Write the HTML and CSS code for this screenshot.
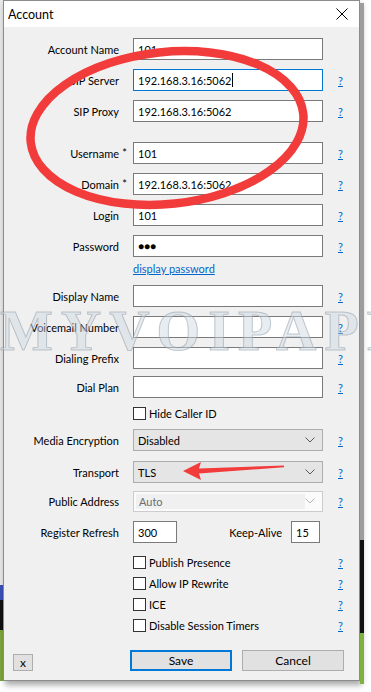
FILE: index.html
```html
<!DOCTYPE html>
<html lang="en">

<head>
    <meta charset="UTF-8" />
    <meta name="viewport" content="width=device-width, initial-scale=1" />
    <title>Account</title>
    <link rel="stylesheet" href="styles.css">
</head>

<body>
    <div class="desktop">
        <div class="sliver-left"></div>

        <div class="window">
            <header class="titlebar">
                <span class="title">Account</span>
                <svg class="close" width="12" height="12" viewBox="0 0 12 12">
                    <path d="M0.5 0.5 L11.5 11.5 M11.5 0.5 L0.5 11.5" stroke="#000" stroke-width="1" />
                </svg>
            </header>

            <main class="form">
                <div class="row">
                    <label class="label">Account Name</label>
                    <div class="field">101</div>
                    <span></span>
                </div>
                <div class="row">
                    <label class="label">SIP Server</label>
                    <div class="field focused">192.168.3.16:5062<span class="caret"></span></div>
                    <a class="help">?</a>
                </div>
                <div class="row gap-wide">
                    <label class="label">SIP Proxy</label>
                    <div class="field">192.168.3.16:5062</div>
                    <a class="help">?</a>
                </div>
                <div class="row">
                    <label class="label">Username<span class="req">*</span></label>
                    <div class="field">101</div>
                    <a class="help">?</a>
                </div>
                <div class="row">
                    <label class="label">Domain<span class="req">*</span></label>
                    <div class="field">192.168.3.16:5062</div>
                    <a class="help">?</a>
                </div>
                <div class="row">
                    <label class="label">Login</label>
                    <div class="field">101</div>
                    <a class="help">?</a>
                </div>
                <div class="row gap-none">
                    <label class="label">Password</label>
                    <div class="field dots">&#9679;&#9679;&#9679;</div>
                    <a class="help">?</a>
                </div>
                <div class="row link-row">
                    <span></span>
                    <a class="link">display password</a>
                    <span></span>
                </div>
                <div class="row">
                    <label class="label">Display Name</label>
                    <div class="field"></div>
                    <a class="help">?</a>
                </div>
                <div class="row">
                    <label class="label">Voicemail Number</label>
                    <div class="field"></div>
                    <a class="help">?</a>
                </div>
                <div class="row gap-small">
                    <label class="label">Dialing Prefix</label>
                    <div class="field"></div>
                    <a class="help">?</a>
                </div>
                <div class="row gap-small">
                    <label class="label">Dial Plan</label>
                    <div class="field"></div>
                    <a class="help">?</a>
                </div>
                <div class="row check-row gap-check">
                    <span></span>
                    <label class="check"><span class="box"></span>Hide Caller ID</label>
                    <span></span>
                </div>
                <div class="row gap-select">
                    <label class="label">Media Encryption</label>
                    <div class="select">Disabled
                        <svg class="chevron" width="10" height="6" viewBox="0 0 10 6"><path d="M0.5 0.5 L5 5 L9.5 0.5" fill="none" stroke="#5a5a5a" /></svg>
                    </div>
                    <a class="help">?</a>
                </div>
                <div class="row gap-small">
                    <label class="label">Transport</label>
                    <div class="select">TLS
                        <svg class="chevron" width="10" height="6" viewBox="0 0 10 6"><path d="M0.5 0.5 L5 5 L9.5 0.5" fill="none" stroke="#5a5a5a" /></svg>
                    </div>
                    <a class="help">?</a>
                </div>
                <div class="row">
                    <label class="label">Public Address</label>
                    <div class="select disabled">
                        <span class="select-text">Auto</span>
                        <svg class="chevron" width="10" height="6" viewBox="0 0 10 6"><path d="M0.5 0.5 L5 5 L9.5 0.5" fill="none" stroke="#b4b4b4" /></svg>
                    </div>
                    <a class="help">?</a>
                </div>
                <div class="row gap-refresh">
                    <label class="label">Register Refresh</label>
                    <div class="split">
                        <div class="field small">300</div>
                        <span class="keep-label">Keep-Alive</span>
                        <div class="field tiny">15</div>
                    </div>
                    <span></span>
                </div>
                <div class="row check-row gap-tight">
                    <span></span>
                    <label class="check"><span class="box"></span>Publish Presence</label>
                    <a class="help">?</a>
                </div>
                <div class="row check-row gap-tight">
                    <span></span>
                    <label class="check"><span class="box"></span>Allow IP Rewrite</label>
                    <a class="help">?</a>
                </div>
                <div class="row check-row gap-tight">
                    <span></span>
                    <label class="check"><span class="box"></span>ICE</label>
                    <a class="help">?</a>
                </div>
                <div class="row check-row gap-last">
                    <span></span>
                    <label class="check"><span class="box"></span>Disable Session Timers</label>
                    <a class="help">?</a>
                </div>

                <div class="footer">
                    <button class="btn btn-x">x</button>
                    <button class="btn btn-save">Save</button>
                    <button class="btn">Cancel</button>
                </div>
            </main>
        </div>

        <div class="sliver-right"></div>
    </div>

    <!-- annotations drawn over the screenshot -->
    <div class="watermark-clip">
        <div class="watermark">MYVOIPAPP</div>
    </div>
    <svg class="marks" width="371" height="692" viewBox="0 0 371 692">
        <ellipse cx="167" cy="128" rx="137" ry="76" transform="rotate(-6 167 128)"
            fill="none" stroke="#f23b3b" stroke-width="8.5" />
        <path d="M183 471 L201 462 L199 468.5 L284 465.5 L284 467.2 L199 473.5 L201 480 Z" fill="#f23b3b" />
    </svg>
</body>
</html>
```

FILE: styles.css
```css
:root {
    --face: #f0f0f0;
    --btn: #e1e1e1;
    --btn-border: #adadad;
    --field-border: #7a7a7a;
    --accent: #0078d7;
    --link: #0066cc;
    --text: #000;
}

* {
    margin: 0;
    padding: 0;
    box-sizing: border-box;
}

body {
    font-family: 'Lato', sans-serif;
    font-size: 11px;
    color: var(--text);
    background-color: white;
    position: relative;
    width: 371px;
    height: 692px;
    overflow: hidden;
}

.desktop {
    display: flex;
    align-items: flex-start;
}

.sliver-left {
    width: 3px;
    height: 681px;
    background: linear-gradient(to bottom, #e9e9e9 0, #e9e9e9 585px, #3b4fb8 585px, #3b4fb8 600px, #111 600px, #111 630px, #7ba63a 630px);
}

.sliver-right {
    width: 4px;
    height: 681px;
    margin-top: 3px;
    background: linear-gradient(to bottom, #9d9d9d 0, #9d9d9d 537px, #111 537px, #111 630px, #80b040 630px);
}

.window {
    width: 357px;
    height: 681px;
    border: 1px solid #8c8c8c;
    background-color: var(--face);
    box-shadow: 2px 4px 6px rgba(0, 0, 0, 0.35);
    display: flex;
    flex-direction: column;
}

.titlebar {
    height: 26px;
    background-color: white;
    display: flex;
    align-items: center;
    justify-content: space-between;
    padding: 0 11px 0 4px;
}

.title {
    font-size: 12.5px;
}

.close {
    display: block;
    margin-top: -1px;
}

.form {
    padding-top: 11px;
    display: flex;
    flex-direction: column;
}

.row {
    display: grid;
    grid-template-columns: 115px 190px auto;
    column-gap: 14px;
    align-items: center;
    height: 22px;
    margin-bottom: 9px;
}

.gap-wide {
    margin-bottom: 20px;
}

.gap-none {
    margin-bottom: 3px;
}

.gap-small {
    margin-bottom: 7px;
}

.gap-check {
    margin-bottom: 8px;
}

.gap-select {
    margin-bottom: 10px;
}

.gap-refresh {
    margin-bottom: 11px;
}

.gap-tight {
    margin-bottom: 5px;
}

.gap-last {
    margin-bottom: 0;
}

.link-row {
    height: 16px;
}

.check-row {
    height: 16px;
}

.label {
    text-align: right;
    position: relative;
    white-space: nowrap;
}

.req {
    position: absolute;
    right: -8px;
    top: -1px;
}

.field {
    height: 22px;
    background-color: white;
    border: 1px solid var(--field-border);
    padding: 0 4px;
    display: flex;
    align-items: center;
    white-space: nowrap;
}

.focused {
    border-color: var(--accent);
}

.caret {
    width: 1px;
    height: 14px;
    background-color: black;
    margin-left: 1px;
}

.dots {
    font-size: 10px;
}

.help {
    color: var(--link);
    text-decoration: underline;
    padding-left: 1px;
}

.link {
    color: var(--link);
    text-decoration: underline;
    white-space: nowrap;
}

.check {
    display: flex;
    align-items: center;
    gap: 3px;
    white-space: nowrap;
}

.box {
    width: 13px;
    height: 13px;
    border: 1px solid #333;
    background-color: white;
}

.select {
    height: 22px;
    background-color: #e5e5e5;
    border: 1px solid var(--btn-border);
    padding: 0 4px;
    display: flex;
    align-items: center;
    justify-content: space-between;
}

.chevron {
    display: block;
    margin-right: 3px;
}

.disabled {
    height: 21px;
    background-color: #fbfbfb;
    border-color: #cccccc;
    padding: 2px 0 2px 2px;
    color: #6d6d6d;
}

.disabled .chevron {
    margin-right: 7px;
}

.select-text {
    align-self: stretch;
    display: flex;
    align-items: center;
    width: 169px;
    padding-left: 3px;
    background-color: var(--face);
}

.split {
    display: flex;
    align-items: center;
}

.small {
    width: 44px;
}

.keep-label {
    margin: 0 9px 0 auto;
    white-space: nowrap;
}

.tiny {
    width: 29px;
    margin-right: 3px;
}

.footer {
    display: flex;
    align-items: center;
    margin-top: 17px;
    padding-left: 9px;
}

.btn {
    font-family: inherit;
    font-size: 12px;
    height: 21px;
    width: 102px;
    background-color: var(--btn);
    border: 1px solid var(--btn-border);
    color: var(--text);
}

.btn-x {
    width: 20px;
    height: 17px;
    margin: 4px 97px 0 0;
}

.btn-save {
    border: 2px solid var(--accent);
    margin-right: 10px;
}

.watermark-clip {
    position: absolute;
    top: 295px;
    left: 0;
    width: 371px;
    height: 70px;
    overflow: hidden;
    pointer-events: none;
}

.watermark {
    margin-top: 4px;
    font-family: 'Liberation Serif', serif;
    font-weight: bold;
    font-size: 56px;
    letter-spacing: 8px;
    color: rgba(205, 214, 224, 0.45);
    -webkit-text-stroke: 1px rgba(150, 160, 172, 0.55);
    white-space: nowrap;
}

.marks {
    position: absolute;
    top: 0;
    left: 0;
    pointer-events: none;
}
```
